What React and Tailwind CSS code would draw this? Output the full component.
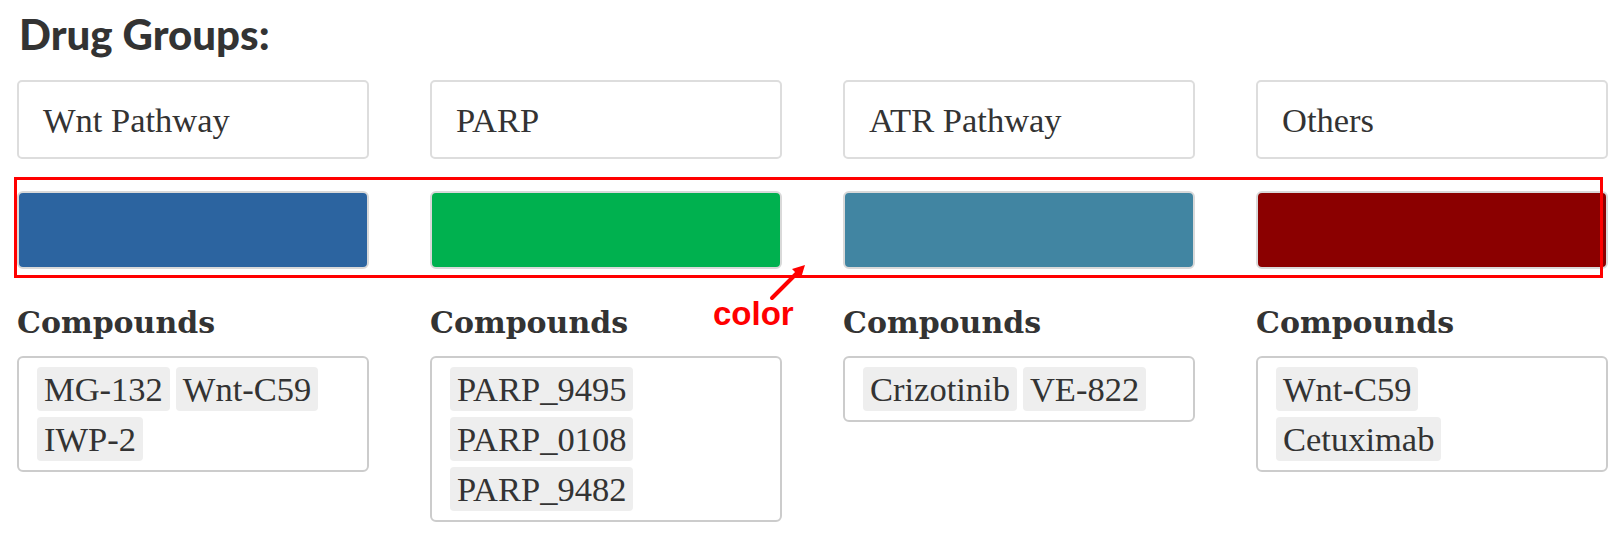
import React from 'react';

const groups = [
    { name: 'Wnt Pathway', color: 'bg-[#2c64a0]', compounds: ['MG-132', 'Wnt-C59', 'IWP-2'] },
    { name: 'PARP', color: 'bg-[#00b14f]', compounds: ['PARP_9495', 'PARP_0108', 'PARP_9482'] },
    { name: 'ATR Pathway', color: 'bg-[#4185a2]', compounds: ['Crizotinib', 'VE-822'] },
    { name: 'Others', color: 'bg-[#8b0000]', compounds: ['Wnt-C59', 'Cetuximab'] },
];

const serif = { fontFamily: '"Liberation Serif", Georgia, serif' };

const App = () => {
    return (
        <div className="relative w-[1624px] h-[546px] bg-white text-[#333] pl-[17px] pt-[11px]">
            <h2
                className="text-[42px] leading-[46px] font-black ml-[2px]"
                style={{ fontFamily: 'Lato, "Liberation Sans", sans-serif' }}
            >
                Drug Groups:
            </h2>

            <div className="grid grid-cols-[repeat(4,352px)] gap-x-[61px] items-start mt-[23px]">
                {groups.map((group) => (
                    <div key={group.name} className="flex flex-col">
                        {/* group name */}
                        <div
                            className="h-[79px] border-2 border-[#dddddd] rounded-[5px] flex items-center pl-[24px] text-[34.5px] leading-[38px]"
                            style={serif}
                        >
                            {group.name}
                        </div>

                        {/* color swatch */}
                        <div className={`mt-[32px] h-[78px] border-2 border-[#d9d9d9] rounded-[6px] ${group.color}`}></div>

                        <h3
                            className="mt-[36px] text-[30px] leading-[36px] font-bold"
                            style={{ fontFamily: '"DejaVu Serif", Georgia, serif' }}
                        >
                            Compounds
                        </h3>

                        <div className="mt-[15px] border-2 border-[#cccccc] rounded-[6px] pl-[18px] pr-[24px] pt-[9px] pb-[9px] flex flex-wrap gap-[6px]">
                            {group.compounds.map((c, i) => (
                                <span
                                    key={i}
                                    className="bg-[#eeeeee] rounded-[4px] px-[7px] h-[44px] text-[34.5px] leading-[44px] whitespace-nowrap"
                                    style={serif}
                                >
                                    {c}
                                </span>
                            ))}
                        </div>
                    </div>
                ))}
            </div>

            {/* annotation overlay */}
            <div className="absolute left-[14px] top-[177px] w-[1589px] h-[101px] border-[3px] border-[#ff0000] pointer-events-none"></div>
            <svg className="absolute left-[760px] top-[255px]" width="55" height="50" viewBox="0 0 55 50">
                <line x1="12" y1="43" x2="37" y2="18" stroke="#ff0000" strokeWidth="4" strokeLinecap="round" />
                <polygon points="45,10 41,23 32,14" fill="#ff0000" />
            </svg>
            <div
                className="absolute left-[713px] top-[297px] text-[33px] leading-[33px] font-bold text-[#ff0000]"
                style={{ fontFamily: '"Liberation Sans", Arial, sans-serif' }}
            >
                color
            </div>
        </div>
    );
};

export default App;
